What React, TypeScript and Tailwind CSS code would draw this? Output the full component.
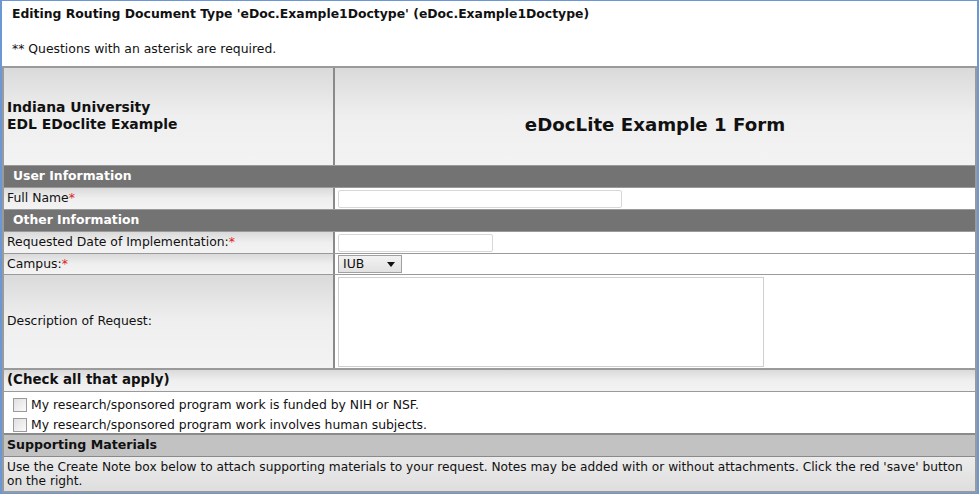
export default function App() {
  const th = 'bg-gradient-to-b from-[#dadada] via-[#efefef] to-[#f3f3f3]';
  const sectionBar = 'h-[22px] bg-[#737373] text-white font-bold pl-[9px] flex items-center border-b border-[#9a9a9a]';
  const req = <span className="text-[#e02020]">*</span>;

  return (
    <div className="w-[979px] h-[494px] bg-white border-x-2 border-y border-[#6b98d4] overflow-hidden text-[12.4px] text-[#111] font-['DejaVu_Sans',Verdana,sans-serif] flex flex-col">
      <div className="h-[65px] px-[10px] pt-[5px] leading-[16px]">
        <div className="font-bold">Editing Routing Document Type 'eDoc.Example1Doctype' (eDoc.Example1Doctype)</div>
        <div className="mt-[19px]">** Questions with an asterisk are required.</div>
      </div>

      <div className="flex-1 border-2 border-[#9a9a9a] flex flex-col">
        {/* header */}
        <div className="h-[98px] flex border-b border-[#9a9a9a]">
          <div className={`w-[331px] ${th} border-r-2 border-[#8a8a8a] flex flex-col justify-center pl-[3px] pb-[2px] text-[13.9px] font-bold leading-[17px]`}>
            <div>Indiana University</div>
            <div>EDL EDoclite Example</div>
          </div>
          <div className={`flex-1 ${th} flex items-center justify-center pt-[17px] text-[18.2px] font-bold`}>
            eDocLite Example 1 Form
          </div>
        </div>

        <div className={sectionBar}>User Information</div>
        <div className="h-[22px] flex border-b border-[#9a9a9a]">
          <div className={`w-[331px] ${th} border-r-2 border-[#8a8a8a] pl-[3px] flex items-center`}>Full Name{req}</div>
          <div className="flex-1 flex items-center pl-[3px]">
            <div className="w-[284px] h-[18px] border border-[#d8d8d8] rounded-[2px] bg-white" />
          </div>
        </div>

        <div className={sectionBar}>Other Information</div>
        <div className="h-[22px] flex border-b border-[#9a9a9a]">
          <div className={`w-[331px] ${th} border-r-2 border-[#8a8a8a] pl-[3px] flex items-center`}>Requested Date of Implementation:{req}</div>
          <div className="flex-1 flex items-center pl-[3px]">
            <div className="w-[155px] h-[18px] border border-[#d8d8d8] rounded-[2px] bg-white" />
          </div>
        </div>
        <div className="h-[21px] flex border-b border-[#9a9a9a]">
          <div className={`w-[331px] ${th} border-r-2 border-[#8a8a8a] pl-[3px] flex items-center`}>Campus:{req}</div>
          <div className="flex-1 flex items-center pl-[3px]">
            <div className="w-[64px] h-[18px] border border-[#a0a0a0] bg-gradient-to-b from-[#f2f2f2] to-[#e2e2e2] flex items-center pl-[4px] pr-[6px] justify-between">
              <span>IUB</span>
              <svg width="8" height="5" viewBox="0 0 8 5"><path d="M0 0h8L4 5z" fill="#111" /></svg>
            </div>
          </div>
        </div>
        <div className="h-[95px] flex border-b-2 border-[#9a9a9a]">
          <div className={`w-[331px] ${th} border-r-2 border-[#8a8a8a] pl-[3px] flex items-center`}>Description of Request:</div>
          <div className="flex-1 pl-[3px] pt-[2px]">
            <div className="w-[426px] h-[90px] border border-[#cfcfcf] bg-white" />
          </div>
        </div>

        <div className={`h-[22px] ${th} font-bold text-[13.4px] pl-[3px] flex items-center border-b border-[#9a9a9a]`}>(Check all that apply)</div>
        <div className="h-[43px] pl-[9px] pt-[5px] flex flex-col gap-[5px] border-b-2 border-[#8a8a8a] leading-[15px]">
          {['My research/sponsored program work is funded by NIH or NSF.', 'My research/sponsored program work involves human subjects.'].map((t) => (
            <div key={t} className="flex items-center gap-[4px]">
              <div className="w-[14px] h-[14px] border border-[#9a9a9a] bg-gradient-to-br from-[#e0e0e0] to-[#fafafa]" />
              <span>{t}</span>
            </div>
          ))}
        </div>
        <div className="h-[22px] bg-[#c2c2c2] font-bold pl-[3px] flex items-center border-b border-[#8a8a8a] text-[12.6px]">Supporting Materials</div>
        <div className="flex-1 bg-gradient-to-b from-[#ececec] to-[#dedede] pl-[3px] pt-[3px] leading-[14px] text-[12.2px]">
          Use the Create Note box below to attach supporting materials to your request. Notes may be added with or without attachments. Click the red 'save' button on the right.
        </div>
      </div>
    </div>
  );
}
